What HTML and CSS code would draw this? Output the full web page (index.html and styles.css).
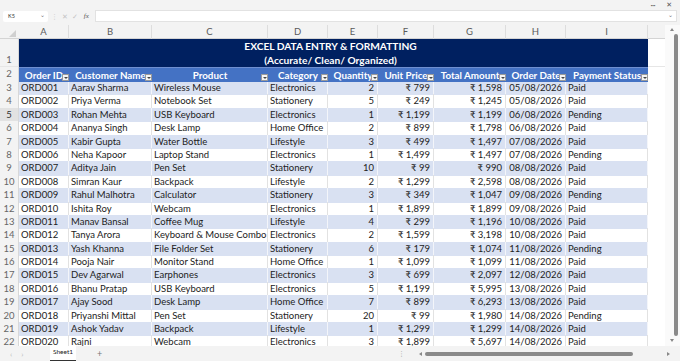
FILE: index.html
```html
<!DOCTYPE html>
<html>
<head>
<meta charset="utf-8">
<link rel="stylesheet" href="styles.css">
</head>
<body>
<div class="app">
  <div class="topbar"><span class="dots">···</span><span class="close">✕</span></div>
  <div class="fbar">
    <div class="namebox"><span>K5</span><span class="chev">⌄</span></div>
    <span class="fsep">⋮</span>
    <span class="ficon">✕</span>
    <span class="ficon">✓</span>
    <span class="fx">fx</span>
    <div class="finput"><span class="chev">⌄</span></div>
  </div>
  <div class="sheet">
    <div class="grid">
      <div class="row colhead">
        <div class="corner"><span class="tri"></span></div>
        <div class="ch">A</div><div class="ch">B</div><div class="ch">C</div><div class="ch">D</div><div class="ch">E</div><div class="ch">F</div><div class="ch">G</div><div class="ch">H</div><div class="ch">I</div><div class="ch last"></div>
      </div>
      <div class="row titlerow">
        <div class="rh rh-bottom">1</div>
        <div class="title">EXCEL DATA ENTRY &amp; FORMATTING<br>(Accurate/ Clean/ Organized)</div>
        <div class="j"></div>
      </div>
      <div class="row hdr">
        <div class="rh">2</div>
        <div class="h">Order ID<span class="fb"></span></div>
        <div class="h">Customer Name<span class="fb"></span></div>
        <div class="h">Product<span class="fb"></span></div>
        <div class="h">Category<span class="fb"></span></div>
        <div class="h">Quantity<span class="fb"></span></div>
        <div class="h">Unit Price<span class="fb"></span></div>
        <div class="h">Total Amount<span class="fb"></span></div>
        <div class="h">Order Date<span class="fb"></span></div>
        <div class="h">Payment Status<span class="fb"></span></div>
        <div class="j"></div>
      </div>

      <div class="row band"><div class="rh">3</div><div class="c">ORD001</div><div class="c">Aarav Sharma</div><div class="c">Wireless Mouse</div><div class="c">Electronics</div><div class="c r">2</div><div class="c r">₹ 799</div><div class="c r">₹ 1,598</div><div class="c r">05/08/2026</div><div class="c">Paid</div><div class="j"></div></div>
      <div class="row"><div class="rh">4</div><div class="c">ORD002</div><div class="c">Priya Verma</div><div class="c">Notebook Set</div><div class="c">Stationery</div><div class="c r">5</div><div class="c r">₹ 249</div><div class="c r">₹ 1,245</div><div class="c r">05/08/2026</div><div class="c">Paid</div><div class="j"></div></div>
      <div class="row band"><div class="rh sel">5</div><div class="c">ORD003</div><div class="c">Rohan Mehta</div><div class="c">USB Keyboard</div><div class="c">Electronics</div><div class="c r">1</div><div class="c r">₹ 1,199</div><div class="c r">₹ 1,199</div><div class="c r">06/08/2026</div><div class="c">Pending</div><div class="j"></div></div>
      <div class="row"><div class="rh">6</div><div class="c">ORD004</div><div class="c">Ananya Singh</div><div class="c">Desk Lamp</div><div class="c">Home Office</div><div class="c r">2</div><div class="c r">₹ 899</div><div class="c r">₹ 1,798</div><div class="c r">06/08/2026</div><div class="c">Paid</div><div class="j"></div></div>
      <div class="row band"><div class="rh">7</div><div class="c">ORD005</div><div class="c">Kabir Gupta</div><div class="c">Water Bottle</div><div class="c">Lifestyle</div><div class="c r">3</div><div class="c r">₹ 499</div><div class="c r">₹ 1,497</div><div class="c r">07/08/2026</div><div class="c">Paid</div><div class="j"></div></div>
      <div class="row"><div class="rh">8</div><div class="c">ORD006</div><div class="c">Neha Kapoor</div><div class="c">Laptop Stand</div><div class="c">Electronics</div><div class="c r">1</div><div class="c r">₹ 1,499</div><div class="c r">₹ 1,497</div><div class="c r">07/08/2026</div><div class="c">Pending</div><div class="j"></div></div>
      <div class="row band"><div class="rh">9</div><div class="c">ORD007</div><div class="c">Aditya Jain</div><div class="c">Pen Set</div><div class="c">Stationery</div><div class="c r">10</div><div class="c r">₹ 99</div><div class="c r">₹ 990</div><div class="c r">08/08/2026</div><div class="c">Paid</div><div class="j"></div></div>
      <div class="row"><div class="rh">10</div><div class="c">ORD008</div><div class="c">Simran Kaur</div><div class="c">Backpack</div><div class="c">Lifestyle</div><div class="c r">2</div><div class="c r">₹ 1,299</div><div class="c r">₹ 2,598</div><div class="c r">08/08/2026</div><div class="c">Paid</div><div class="j"></div></div>
      <div class="row band"><div class="rh">11</div><div class="c">ORD009</div><div class="c">Rahul Malhotra</div><div class="c">Calculator</div><div class="c">Stationery</div><div class="c r">3</div><div class="c r">₹ 349</div><div class="c r">₹ 1,047</div><div class="c r">09/08/2026</div><div class="c">Pending</div><div class="j"></div></div>
      <div class="row"><div class="rh">12</div><div class="c">ORD010</div><div class="c">Ishita Roy</div><div class="c">Webcam</div><div class="c">Electronics</div><div class="c r">1</div><div class="c r">₹ 1,899</div><div class="c r">₹ 1,899</div><div class="c r">09/08/2026</div><div class="c">Paid</div><div class="j"></div></div>
      <div class="row band"><div class="rh">13</div><div class="c">ORD011</div><div class="c">Manav Bansal</div><div class="c">Coffee Mug</div><div class="c">Lifestyle</div><div class="c r">4</div><div class="c r">₹ 299</div><div class="c r">₹ 1,196</div><div class="c r">10/08/2026</div><div class="c">Paid</div><div class="j"></div></div>
      <div class="row"><div class="rh">14</div><div class="c">ORD012</div><div class="c">Tanya Arora</div><div class="c">Keyboard &amp; Mouse Combo</div><div class="c">Electronics</div><div class="c r">2</div><div class="c r">₹ 1,599</div><div class="c r">₹ 3,198</div><div class="c r">10/08/2026</div><div class="c">Paid</div><div class="j"></div></div>
      <div class="row band"><div class="rh">15</div><div class="c">ORD013</div><div class="c">Yash Khanna</div><div class="c">File Folder Set</div><div class="c">Stationery</div><div class="c r">6</div><div class="c r">₹ 179</div><div class="c r">₹ 1,074</div><div class="c r">11/08/2026</div><div class="c">Pending</div><div class="j"></div></div>
      <div class="row"><div class="rh">16</div><div class="c">ORD014</div><div class="c">Pooja Nair</div><div class="c">Monitor Stand</div><div class="c">Home Office</div><div class="c r">1</div><div class="c r">₹ 1,099</div><div class="c r">₹ 1,099</div><div class="c r">11/08/2026</div><div class="c">Paid</div><div class="j"></div></div>
      <div class="row band"><div class="rh">17</div><div class="c">ORD015</div><div class="c">Dev Agarwal</div><div class="c">Earphones</div><div class="c">Electronics</div><div class="c r">3</div><div class="c r">₹ 699</div><div class="c r">₹ 2,097</div><div class="c r">12/08/2026</div><div class="c">Paid</div><div class="j"></div></div>
      <div class="row"><div class="rh">18</div><div class="c">ORD016</div><div class="c">Bhanu Pratap</div><div class="c">USB Keyboard</div><div class="c">Electronics</div><div class="c r">5</div><div class="c r">₹ 1,199</div><div class="c r">₹ 5,995</div><div class="c r">13/08/2026</div><div class="c">Paid</div><div class="j"></div></div>
      <div class="row band"><div class="rh">19</div><div class="c">ORD017</div><div class="c">Ajay Sood</div><div class="c">Desk Lamp</div><div class="c">Home Office</div><div class="c r">7</div><div class="c r">₹ 899</div><div class="c r">₹ 6,293</div><div class="c r">13/08/2026</div><div class="c">Paid</div><div class="j"></div></div>
      <div class="row"><div class="rh">20</div><div class="c">ORD018</div><div class="c">Priyanshi Mittal</div><div class="c">Pen Set</div><div class="c">Stationery</div><div class="c r">20</div><div class="c r">₹ 99</div><div class="c r">₹ 1,980</div><div class="c r">14/08/2026</div><div class="c">Pending</div><div class="j"></div></div>
      <div class="row band"><div class="rh">21</div><div class="c">ORD019</div><div class="c">Ashok Yadav</div><div class="c">Backpack</div><div class="c">Lifestyle</div><div class="c r">1</div><div class="c r">₹ 1,299</div><div class="c r">₹ 1,299</div><div class="c r">14/08/2026</div><div class="c">Paid</div><div class="j"></div></div>
      <div class="row"><div class="rh">22</div><div class="c">ORD020</div><div class="c">Rajni</div><div class="c">Webcam</div><div class="c">Electronics</div><div class="c r">3</div><div class="c r">₹ 1,899</div><div class="c r">₹ 5,697</div><div class="c r">14/08/2026</div><div class="c">Paid</div><div class="j"></div></div>
    </div>
    <div class="vscroll">
      <span class="arr up"></span>
      <span class="vthumb"></span>
      <span class="arr down"></span>
    </div>
  </div>
  <div class="bottombar">
    <div class="nav"><span>‹</span><span>›</span></div>
    <div class="tab">Sheet1</div>
    <div class="plus">+</div>
    <div class="spacer"></div>
    <span class="bsep">⋮</span>
    <div class="hscroll">
      <span class="arr left"></span>
      <span class="hthumb"></span>
      <span class="arr right"></span>
    </div>
  </div>
</div>
</body>
</html>
```
FILE: styles.css
```css
* { box-sizing: border-box; }
body {
  margin: 0;
  width: 680px;
  height: 361px;
  overflow: hidden;
  background: #f3f3f3;
  font-family: "Lato", "DejaVu Sans", sans-serif;
  color: #222;
}
.app { display: flex; flex-direction: column; height: 361px; }

.topbar {
  height: 9px;
  display: flex;
  justify-content: flex-end;
  align-items: center;
  gap: 11px;
  padding-right: 8px;
  font-size: 7px;
  color: #555;
}
.topbar .dots { font-size: 8px; letter-spacing: -0.5px; }

.fbar {
  height: 16px;
  display: flex;
  align-items: center;
  padding: 0 3px 2px 3px;
}
.namebox {
  width: 45px;
  height: 11px;
  background: #fff;
  border-radius: 2px;
  display: flex;
  align-items: center;
  justify-content: space-between;
  padding: 0 3px 0 5px;
  font-size: 5.5px;
  color: #333;
}
.chev { font-size: 6px; color: #777; line-height: 6px; margin-top: -3px; }
.fsep { font-size: 7px; color: #c8c8c8; margin: 0 4px 0 3px; }
.ficon { font-size: 7px; color: #c4c4c4; margin-right: 4px; }
.fx { font-size: 7px; font-style: italic; font-family: "Liberation Serif", serif; color: #555; margin: 0 6px 0 2px; }
.finput {
  flex: 1;
  height: 12px;
  background: #fff;
  border: 1px solid #e2e2e2;
  display: flex;
  justify-content: flex-end;
  align-items: center;
  padding-right: 3px;
}

.sheet { display: flex; height: 321px; background: #fff; }
.grid { width: 665px; overflow: hidden; font-size: 9.5px; }
.row {
  display: grid;
  grid-template-columns: 19px 50px 83px 116px 60px 50px 56px 72px 60px 82px 17px;
  height: 13.4px;
  line-height: 13.4px;
}
.colhead { height: 14px; line-height: 14px; background: #f3f3f3; border-bottom: 1px solid #d4d4d4; }
.corner { position: relative; }
.tri {
  position: absolute; right: 3px; bottom: 2px;
  width: 0; height: 0;
  border-left: 7px solid transparent;
  border-bottom: 7px solid #d0d0d0;
}
.ch {
  text-align: center;
  color: #5a5a5a;
  font-size: 9.5px;
  border-right: 1px solid #dddddd;
}
.ch.last { border-right: none; }
.titlerow { height: 28px; }
.title {
  grid-column: 2 / span 9;
  background: #002060;
  color: #fff;
  font-weight: bold;
  font-size: 10.2px;
  line-height: 14px;
  text-align: center;
  padding-right: 6px;
}
.rh {
  background: #f3f3f3;
  color: #666;
  text-align: center;
  font-size: 9.5px;
  border-right: 1px solid #d8d8d8;
  border-bottom: 1px solid #e6e6e6;
}
.rh-bottom { display: flex; align-items: flex-end; justify-content: center; line-height: 13px; }
.rh.sel { background: #e2e2e2; color: #333; }
.hdr { height: 14px; line-height: 14px; }
.h {
  position: relative;
  background: #4472c4;
  color: #fff;
  font-weight: bold;
  font-size: 9.8px;
  text-align: center;
  white-space: nowrap;
  overflow: hidden;
  border-top: 1px solid #6f8fd0;
}
.fb {
  position: absolute;
  right: 0;
  bottom: 1px;
  width: 7px;
  height: 7px;
  background: #f4f4f4;
  border: 1px solid #9a9a9a;
}
.fb::after {
  content: "";
  position: absolute;
  left: 1px; top: 2px;
  border-left: 2px solid transparent;
  border-right: 2px solid transparent;
  border-top: 2px solid #444;
}
.c {
  padding: 0 2px;
  white-space: nowrap;
  overflow: hidden;
  color: #222;
  border-right: 1px solid #e2e2e2;
  border-bottom: 1px solid #e8e8e8;
}
.c.r { text-align: right; padding-right: 3px; }
.band .c { background: #d9e1f2; border-right-color: #f3f5fa; border-bottom-color: #d9e1f2; }
.j { border-bottom: 1px solid #e6e6e6; background: #fff; }

.vscroll {
  width: 15px;
  background: #fafafa;
  display: flex;
  flex-direction: column;
  align-items: center;
  padding: 3px 0 0 4px;
  gap: 3px;
}
.vthumb { width: 4px; flex: 1; background: #8a8a8a; border-radius: 2px; margin-left: 2px; }
.arr { width: 0; height: 0; }
.arr.up { border-left: 2px solid transparent; border-right: 2px solid transparent; border-bottom: 3px solid #888; margin-left: -6px; }
.arr.down { border-left: 2px solid transparent; border-right: 2px solid transparent; border-top: 3px solid #888; margin: 0 0 4px -6px; }

.bottombar {
  height: 15px;
  display: flex;
  align-items: center;
  background: #f3f3f3;
  font-size: 7px;
  color: #555;
}
.nav { width: 50px; display: flex; gap: 9px; padding-left: 10px; color: #bbb; font-size: 8px; }
.tab {
  width: 26px;
  height: 15px;
  background: #fff;
  text-align: center;
  font-size: 6.5px;
  line-height: 12px;
  color: #222;
  border-bottom: 1px solid #333;
}
.plus { margin-left: 21px; font-size: 9px; color: #777; }
.spacer { flex: 1; }
.bsep { font-size: 7px; color: #999; margin-right: 14px; }
.hscroll {
  width: 261px;
  display: flex;
  align-items: center;
  gap: 3px;
  padding-right: 10px;
}
.hthumb { height: 4px; width: 208px; background: #8a8a8a; border-radius: 2px; margin-right: auto; }
.arr.left { border-top: 2px solid transparent; border-bottom: 2px solid transparent; border-right: 3px solid #888; }
.arr.right { border-top: 2px solid transparent; border-bottom: 2px solid transparent; border-left: 3px solid #888; }
```
